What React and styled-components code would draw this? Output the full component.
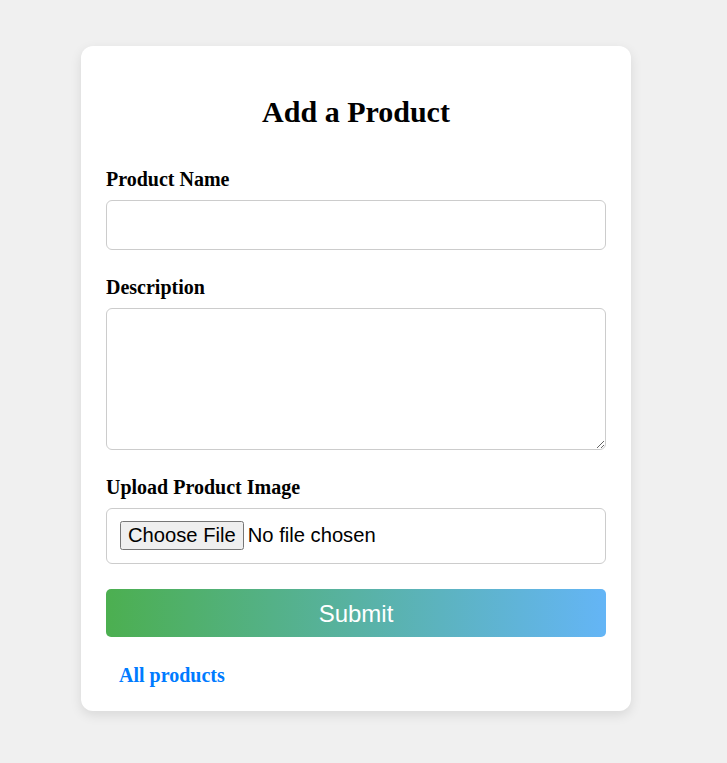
import React from "react";
import styled, { createGlobalStyle } from "styled-components";

const Global = createGlobalStyle`
  html, body {
    margin: 0;
    padding: 0;
    background: #f0f0f0;
    font-family: "Liberation Serif", "Times New Roman", serif;
  }
  * { box-sizing: border-box; }
`;

const Page = styled.div`
  padding: 46px 0 40px 81px;
`;

const Card = styled.div`
  width: 550px;
  background: #fff;
  border-radius: 12px;
  padding: 49px 25px 24px;
  box-shadow: 0 4px 12px rgba(0, 0, 0, 0.1);
`;

const Title = styled.h2`
  margin: 0 0 38px;
  text-align: center;
  font-size: 30px;
  line-height: 34px;
  font-weight: bold;
  color: #000;
`;

const Form = styled.form`
  display: flex;
  flex-direction: column;
`;

const Field = styled.div`
  display: flex;
  flex-direction: column;
  margin-bottom: 25px;
`;

const Label = styled.label`
  font-size: 20px;
  line-height: 23px;
  font-weight: bold;
  color: #000;
  padding-top: 1px;
  margin-bottom: 9px;
`;

const TextInput = styled.input`
  width: 100%;
  height: 50px;
  border: 1px solid #ccc;
  border-radius: 6px;
  padding: 10px;
  font-size: 16px;
  outline: none;
`;

const TextArea = styled.textarea`
  width: 100%;
  height: 142px;
  border: 1px solid #ccc;
  border-radius: 6px;
  padding: 10px;
  font-size: 16px;
  outline: none;
  display: block;
`;

const FileBox = styled.input`
  width: 100%;
  height: 56px;
  border: 1px solid #ccc;
  border-radius: 6px;
  padding: 12px 13px;
  font-family: "Liberation Sans", Arial, sans-serif;
  font-size: 20.2px;
  color: #000;
`;

const SubmitButton = styled.button`
  width: 100%;
  height: 48px;
  border: none;
  border-radius: 5px;
  background: linear-gradient(to right, #4caf50, #64b5f6);
  color: #fff;
  font-family: "Liberation Sans", Arial, sans-serif;
  font-size: 24px;
  padding-top: 2px;
  cursor: pointer;
`;

const LinkRow = styled.div`
  margin-top: 27px;
  padding-left: 13px;
`;

const NavLink = styled.a`
  font-size: 20px;
  line-height: 23px;
  font-weight: bold;
  color: #007bff;
  text-decoration: none;
`;

export default function App() {
  return (
    <>
      <Global />
      <Page>
        <Card>
          <Title>Add a Product</Title>
          <Form onSubmit={(e) => e.preventDefault()}>
            <Field>
              <Label htmlFor="name">Product Name</Label>
              <TextInput id="name" type="text" />
            </Field>
            <Field>
              <Label htmlFor="desc">Description</Label>
              <TextArea id="desc" />
            </Field>
            <Field>
              <Label htmlFor="img">Upload Product Image</Label>
              <FileBox id="img" type="file" />
            </Field>
            <SubmitButton type="submit">Submit</SubmitButton>
          </Form>
          <LinkRow>
            <NavLink href="#">All products</NavLink>
          </LinkRow>
        </Card>
      </Page>
    </>
  );
}
